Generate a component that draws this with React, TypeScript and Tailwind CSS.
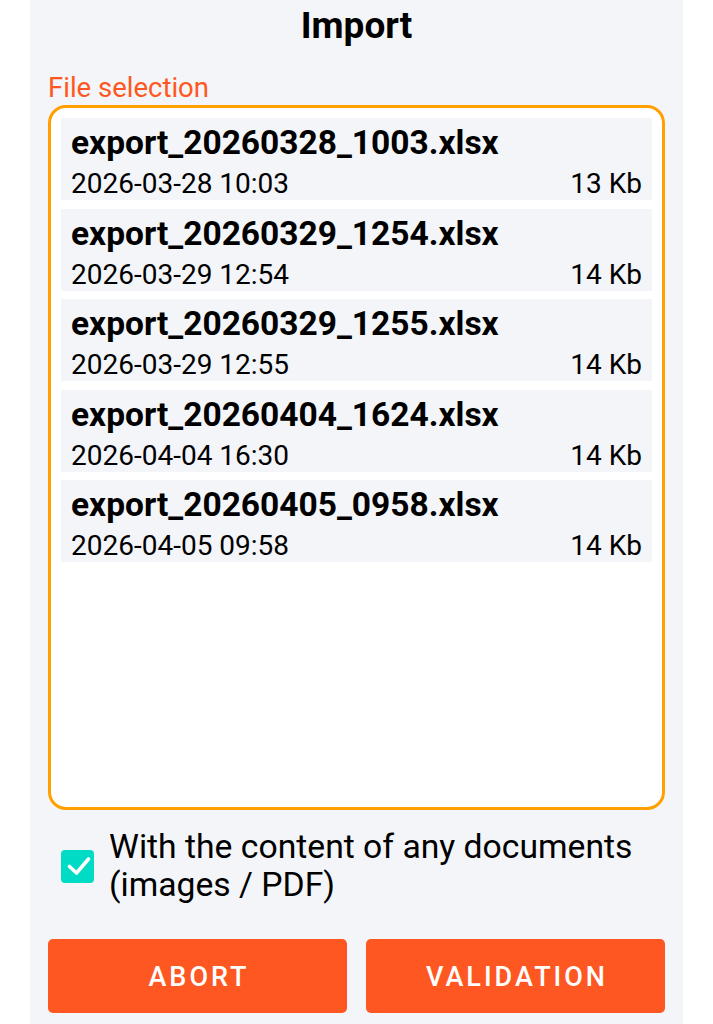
import { useState } from "react";

type ExportFile = {
  name: string;
  date: string;
  size: string;
};

const files: ExportFile[] = [
  { name: "export_20260328_1003.xlsx", date: "2026-03-28 10:03", size: "13 Kb" },
  { name: "export_20260329_1254.xlsx", date: "2026-03-29 12:54", size: "14 Kb" },
  { name: "export_20260329_1255.xlsx", date: "2026-03-29 12:55", size: "14 Kb" },
  { name: "export_20260404_1624.xlsx", date: "2026-04-04 16:30", size: "14 Kb" },
  { name: "export_20260405_0958.xlsx", date: "2026-04-05 09:58", size: "14 Kb" },
];

function FileRow({ file }: { file: ExportFile }) {
  return (
    <div className="flex h-[82px] flex-col bg-[#f4f5f9] px-[10px] text-black">
      <p className="text-[33.5px] font-bold leading-[50px]">{file.name}</p>
      <div className="flex justify-between text-[28px] leading-[32px]">
        <span>{file.date}</span>
        <span>{file.size}</span>
      </div>
    </div>
  );
}

function CheckBox({ checked, onToggle }: { checked: boolean; onToggle: () => void }) {
  return (
    <button
      type="button"
      onClick={onToggle}
      className={`flex h-[33px] w-[33px] shrink-0 items-center justify-center rounded-[4px] ${
        checked ? "bg-[#00dbc6]" : "border-2 border-gray-500 bg-transparent"
      }`}
    >
      {checked && (
        <svg viewBox="0 0 33 33" className="h-[33px] w-[33px]">
          <polyline
            points="8.5,16.5 15.5,23 27.5,9"
            fill="none"
            stroke="white"
            strokeWidth="3.6"
            strokeLinecap="round"
            strokeLinejoin="round"
          />
        </svg>
      )}
    </button>
  );
}

export default function App() {
  const [withDocs, setWithDocs] = useState(true);

  return (
    <div className="flex min-h-screen justify-center bg-white font-['Roboto',sans-serif]">
      <div className="h-[1024px] w-[653px] bg-[#f4f5f9] px-[18px] pt-[4px]">
        <h1 className="text-center text-[37px] font-bold leading-[44px] text-black">Import</h1>

        <p className="mt-[23px] text-[27.5px] leading-[34px] text-[#ff5722]">File selection</p>

        <div className="h-[705px] rounded-[18px] border-[3px] border-[#ffa000] bg-white pl-[10px] pr-[10px] pt-[10px]">
          <div className="flex flex-col gap-[8.5px]">
            {files.map((f) => (
              <FileRow key={f.name} file={f} />
            ))}
          </div>
        </div>

        <div className="mt-[18px] flex items-center gap-[15px] pl-[13px]">
          <CheckBox checked={withDocs} onToggle={() => setWithDocs(!withDocs)} />
          <p className="text-[33.7px] leading-[38px] text-black">
            With the content of any documents
            <br />
            (images / PDF)
          </p>
        </div>

        {/* pl offsets the trailing letter-spacing so the labels sit centred */}
        <div className="mt-[35px] grid grid-cols-2 gap-[19px]">
          <button
            type="button"
            className="h-[74px] rounded-[5px] bg-[#ff5722] pl-[3px] pt-[3px] text-[27px] font-medium tracking-[3px] text-white"
          >
            ABORT
          </button>
          <button
            type="button"
            className="h-[74px] rounded-[5px] bg-[#ff5722] pl-[3px] pt-[3px] text-[27px] font-medium tracking-[3px] text-white"
          >
            VALIDATION
          </button>
        </div>
      </div>
    </div>
  );
}
